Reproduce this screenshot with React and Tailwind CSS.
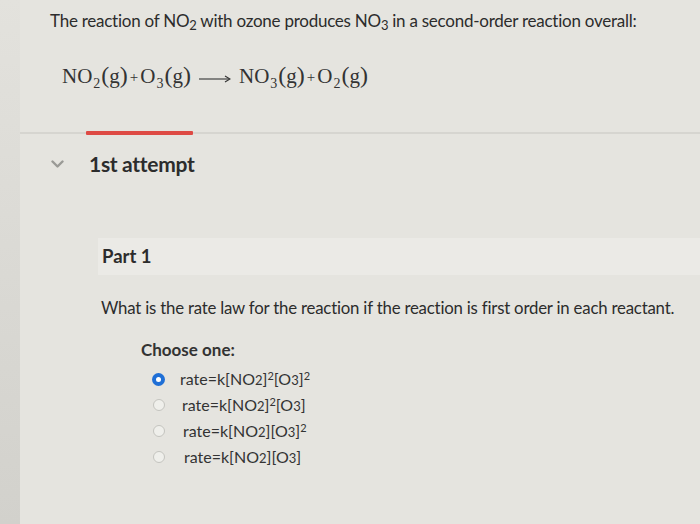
import React from "react";

const OPTIONS = [
  { id: "a", sup1: true, sup2: true, selected: true },
  { id: "b", sup1: true, sup2: false },
  { id: "c", sup1: false, sup2: true },
  { id: "d", sup1: false, sup2: false },
];

function Radio({ selected }) {
  if (selected) {
    return (
      <span className="w-[13px] h-[13px] rounded-full bg-[#1f6fd6] flex items-center justify-center shrink-0">
        <span className="w-[5px] h-[5px] rounded-full bg-white" />
      </span>
    );
  }
  return <span className="w-[12px] h-[12px] rounded-full border-[1.5px] border-[#c4c4bf] bg-[#efefeb] shrink-0" />;
}

function Chevron() {
  return (
    <svg width="13" height="9" viewBox="0 0 13 9" fill="none">
      <path d="M1.5 1.5 L6.5 6.5 L11.5 1.5" stroke="#9a9a96" strokeWidth="2.4" strokeLinecap="round" strokeLinejoin="round" />
    </svg>
  );
}

function Species({ el, sub }) {
  return (
    <span className="inline-flex items-baseline">
      {el}
      <span className="inline-block text-[14px] translate-y-[5px] ml-[1px]">{sub}</span>
      <span className="text-[24px] ml-[1px]">(</span>g<span className="text-[24px]">)</span>
    </span>
  );
}

function Arrow() {
  return (
    <svg width="32" height="10" viewBox="0 0 32 10" className="mx-[8px] translate-y-[2px]">
      <line x1="0" y1="5" x2="30" y2="5" stroke="#333" strokeWidth="1.1" />
      <path d="M26 2 L31 5 L26 8" stroke="#333" strokeWidth="1.1" fill="none" />
    </svg>
  );
}

export default function App() {
  return (
    <div className="w-[700px] h-[524px] flex bg-[#e5e4df] overflow-hidden font-['Lato',sans-serif] text-[#2c2c2c]">
      {/* left edge of the screen */}
      <div className="w-[20px] shrink-0 bg-gradient-to-b from-[#e3e2dd] to-[#d2d1cc]" />

      <div className="flex-1 flex flex-col">
        <h1 className="pl-[30px] pt-[8px] text-[17px] leading-[26px] tracking-[-0.25px]">
          The reaction of NO<sub className="text-[13px]">2</sub> with ozone produces NO
          <sub className="text-[13px]">3</sub> in a second-order reaction overall:
        </h1>

        <div className="pl-[42px] mt-[26px] font-['Liberation_Serif',serif] text-[21px] leading-[30px] text-[#333] flex items-center">
          <Species el="NO" sub="2" />
          <span className="mx-[2px] text-[15px]">+</span>
          <Species el="O" sub="3" />
          <Arrow />
          <Species el="NO" sub="3" />
          <span className="mx-[2px] text-[15px]">+</span>
          <Species el="O" sub="2" />
        </div>

        {/* tab divider */}
        <div className="relative mt-[37px] h-[4px]">
          <div className="absolute left-0 right-0 top-[1px] h-[2px] bg-[#d6d5d0]" />
          <div className="absolute left-[66px] top-0 w-[107px] h-[4px] bg-[#de4a44] rounded-[1px]" />
        </div>

        <div className="flex items-center mt-[17px] h-[24px]">
          <span className="ml-[31px] w-[38px] flex">
            <Chevron />
          </span>
          <span className="text-[21px] font-bold tracking-[-0.3px]">1st attempt</span>
        </div>

        <div className="mt-[62px] ml-[78px] h-[37px] bg-[#ebeae6] flex items-center pl-[4px]">
          <span className="text-[18.5px] font-bold">Part 1</span>
        </div>

        <p className="mt-[22px] ml-[81px] text-[16.8px] leading-[22px] tracking-[-0.2px]">
          What is the rate law for the reaction if the reaction is first order in each reactant.
        </p>

        <div className="mt-[21px] ml-[121px]">
          <p className="text-[17px] font-bold leading-[20px] text-[#333]">Choose one:</p>
          <ul className="mt-[6px] flex flex-col">
            {OPTIONS.map((o, i) => (
              <li key={o.id} className={"flex items-center h-[26px] " + (o.selected ? "pl-[11px]" : "pl-[12px]")}>
                <Radio selected={o.selected} />
                <span className={["ml-[15px]", "ml-[17px]", "ml-[18px]", "ml-[19px]"][i] + " text-[16px] text-[#333]"}>
                  rate=k[NO<span className="text-[13px]">2</span>]
                  {o.sup1 && <sup className="text-[11px] -top-[5px]">2</sup>}
                  [O<span className="text-[13px]">3</span>]
                  {o.sup2 && <sup className="text-[11px] -top-[5px]">2</sup>}
                </span>
              </li>
            ))}
          </ul>
        </div>
      </div>
    </div>
  );
}
